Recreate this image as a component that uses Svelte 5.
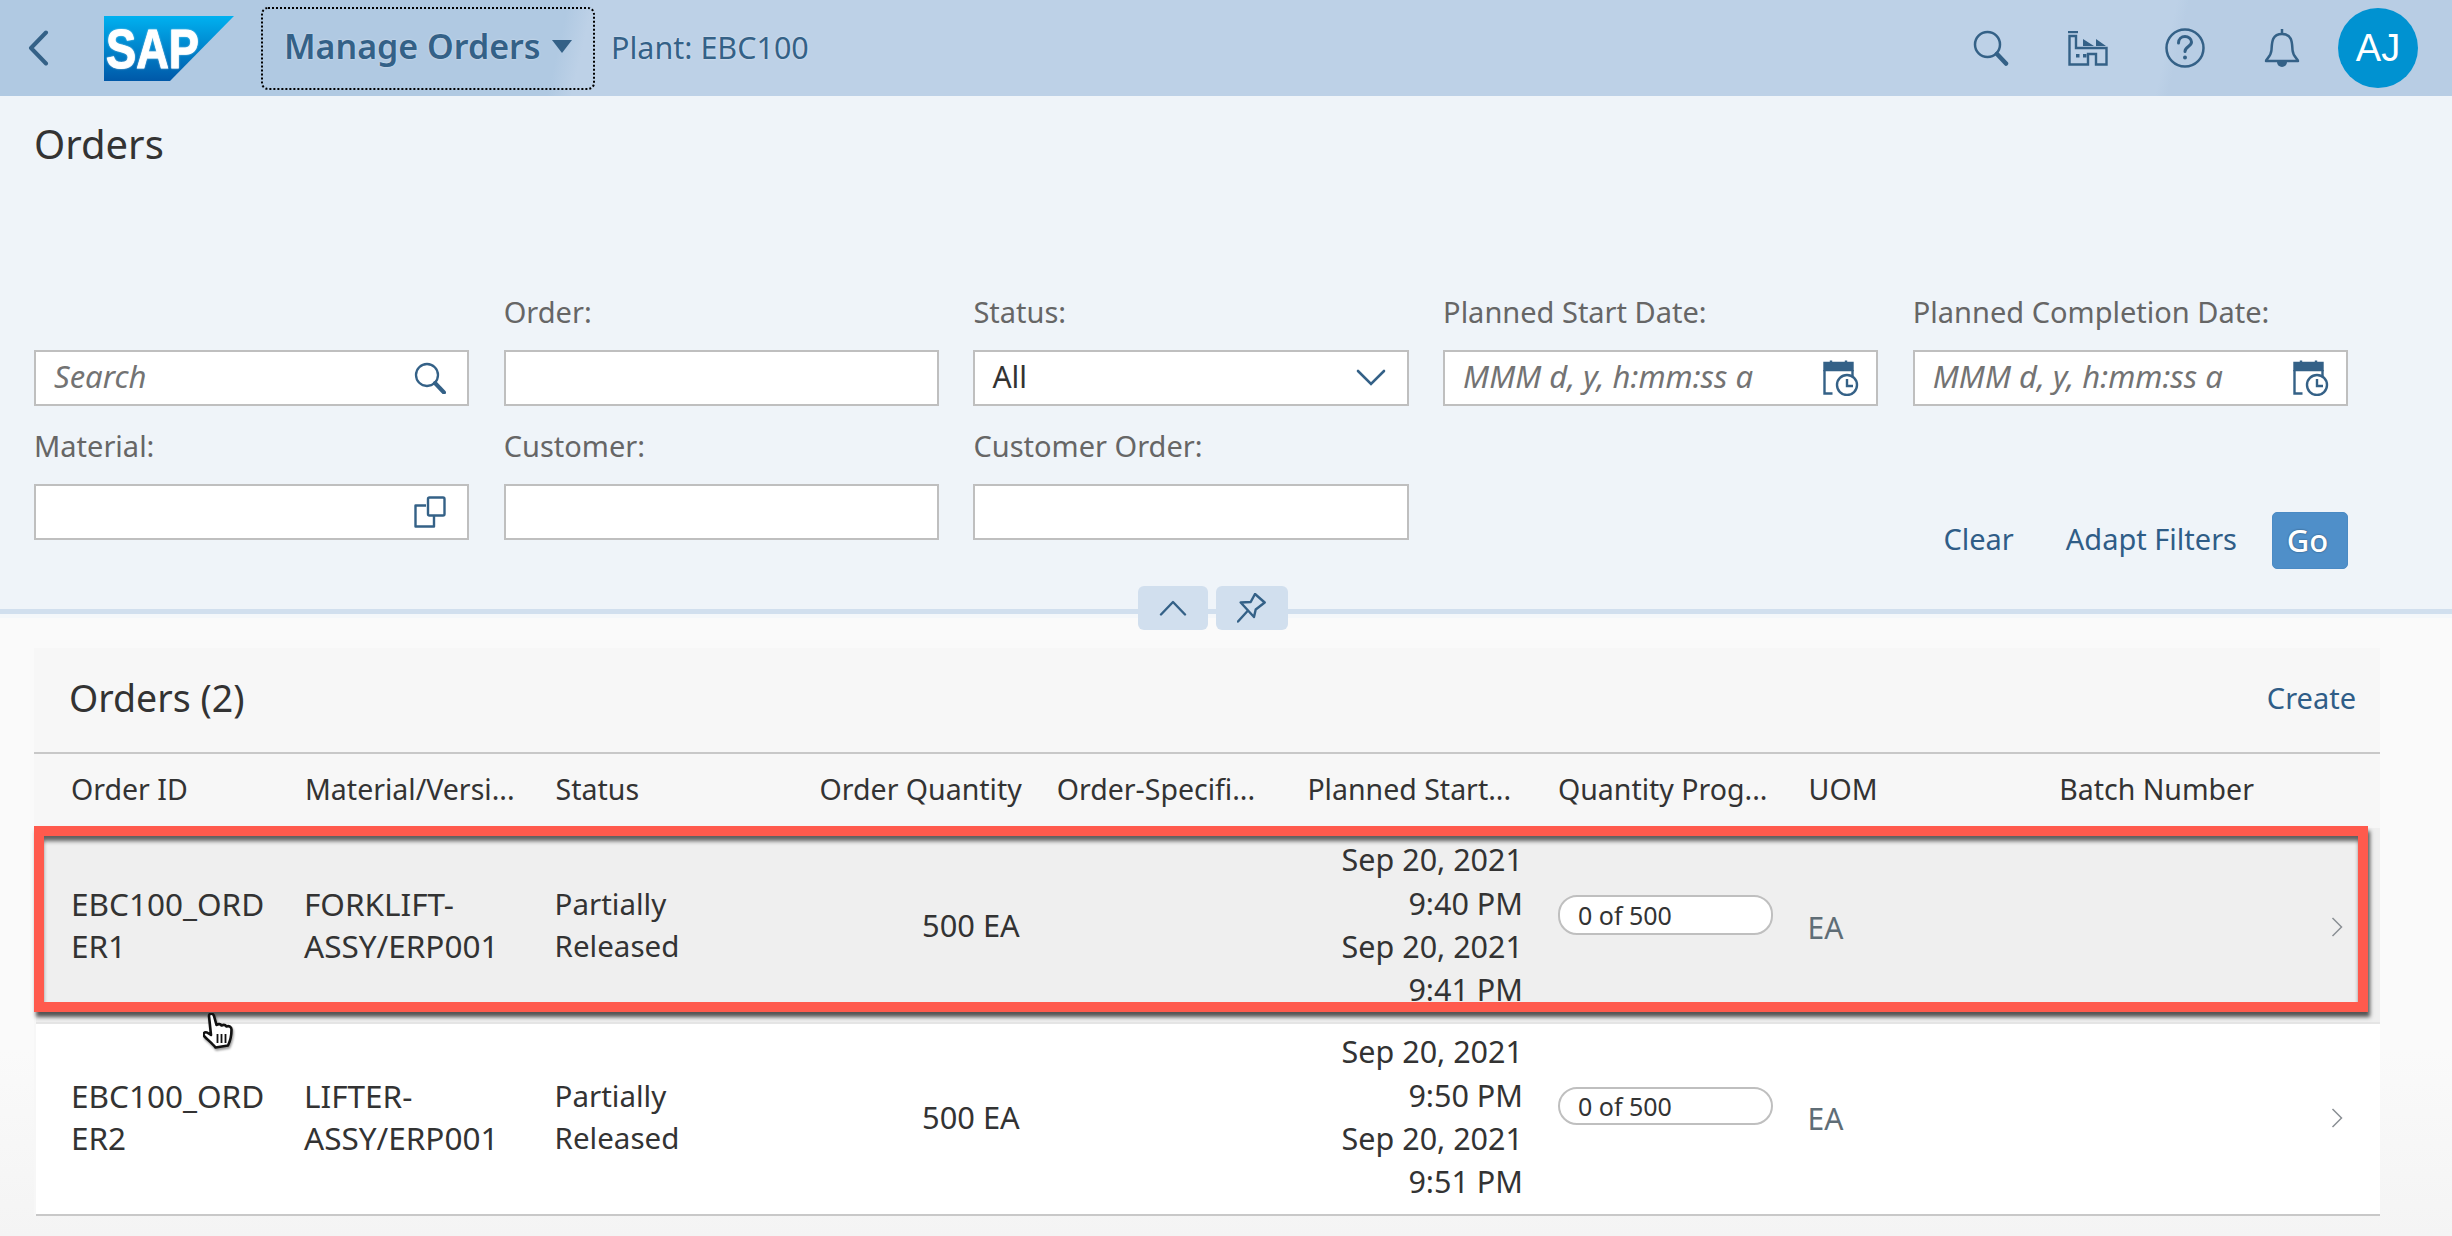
<script>
  const columns = [
    { label: 'Order ID' },
    { label: 'Material/Versi...' },
    { label: 'Status' },
    { label: 'Order Quantity', right: true },
    { label: 'Order-Specifi...' },
    { label: 'Planned Start...' },
    { label: 'Quantity Prog...' },
    { label: 'UOM' },
    { label: 'Batch Number' }
  ];
  const rows = [
    { id: ['EBC100_ORD', 'ER1'], mat: ['FORKLIFT-', 'ASSY/ERP001'], times: ['Sep 20, 2021', '9:40 PM', 'Sep 20, 2021', '9:41 PM'], active: true },
    { id: ['EBC100_ORD', 'ER2'], mat: ['LIFTER-', 'ASSY/ERP001'], times: ['Sep 20, 2021', '9:50 PM', 'Sep 20, 2021', '9:51 PM'], active: false }
  ];
</script>

{#snippet calendar()}
  <svg class="ficon cal" width="36" height="36" viewBox="0 0 36 36" fill="none" stroke="#346187" stroke-width="2.4">
    <path d="M1.5 3h28v7h-28z" fill="#346187" />
    <path d="M8 0.5v3M23 0.5v3" />
    <path d="M1.5 10v23.5h8M29.5 10v6" />
    <circle cx="24" cy="25" r="10" />
    <path d="M24 19v7h6" />
  </svg>
{/snippet}

<div class="page">
  <header class="shell">
    <svg class="back" width="21" height="36" viewBox="0 0 21 36" fill="none" stroke="#346187" stroke-width="4" stroke-linecap="round" stroke-linejoin="round"><path d="M18 2.500 3 18l15 15.500" /></svg>
    <svg class="logo" width="130" height="65" viewBox="0 0 130 65">
      <defs><linearGradient id="sapg" x1="0" y1="0" x2="0" y2="1"><stop offset="0" stop-color="#00b1f0" /><stop offset="1" stop-color="#0058a8" /></linearGradient></defs>
      <path d="M0 0h130L66 65H0z" fill="url(#sapg)" />
      <text x="2" y="52" textLength="93" lengthAdjust="spacingAndGlyphs" font-family="Liberation Sans" font-weight="700" font-size="56" fill="#fff" stroke="#fff" stroke-width="1">SAP</text>
    </svg>
    <div class="appbtn">
      <span class="apptitle">Manage Orders</span>
      <span class="caret"></span>
    </div>
    <span class="plant">Plant: EBC100</span>
    <div class="shellend">
      <span class="hicon"><svg width="36" height="37" viewBox="0 0 36 37" fill="none" stroke="#346187" stroke-width="2.500" stroke-linecap="round"><circle cx="14.500" cy="14.500" r="12.500" /><path d="M24 24l9 9.500" stroke-width="4.500" /></svg></span>
      <span class="hicon"><svg width="40" height="35" viewBox="0 0 40 35" fill="none" stroke="#346187" stroke-width="2.400"><path d="M0 1h10" /><path d="M1.500 5h6.500v12h30.500v16.500H28V23h-8v10.500H1.500z" /><path d="M15 8l11 7H15zM28 8l10 7H28z" fill="#346187" stroke="none" /><path d="M8 23h3.500v3.500H8zM15 23h3.500v3.500H15z" fill="#346187" stroke="none" /></svg></span>
      <span class="hicon"><svg width="40" height="40" viewBox="0 0 40 40" fill="none" stroke="#346187" stroke-width="2.500" stroke-linecap="round"><circle cx="20" cy="20" r="18.500" /><path d="M13.500 15c0-4 3-6.500 6.500-6.500s6.500 2.500 6.500 5.500c0 4.500-6.500 4.500-6.500 9.500" stroke-width="3" /><circle cx="20" cy="29.500" r="2" fill="#346187" stroke="none" /></svg></span>
      <span class="hicon"><svg width="36" height="40" viewBox="0 0 36 40" fill="none" stroke="#346187" stroke-width="2.500" stroke-linejoin="round"><path d="M2 33c0-2 5-4 5.500-11 .5-7 0-16 10.500-16s10 9 10.500 16c.5 7 5.500 9 5.500 11z" /><path d="M18 1v5" /><path d="M13 34a5 5 0 0 0 10 0z" fill="#346187" stroke="none" /></svg></span>
      <span class="avatar">AJ</span>
    </div>
  </header>

  <section class="filterbar">
    <h1>Orders</h1>
    <div class="grid">
      <div class="field">
        <span class="label"></span>
        <div class="input"><span class="ph">Search</span>
          <svg class="ficon search" width="32" height="32" viewBox="0 0 32 32" fill="none" stroke="#346187" stroke-width="2.300" stroke-linecap="round"><circle cx="13" cy="13" r="11" /><path d="M21 21l9 9.500" stroke-width="4" /></svg>
        </div>
      </div>
      <div class="field"><span class="label">Order:</span><div class="input"></div></div>
      <div class="field"><span class="label">Status:</span>
        <div class="input"><span class="val">All</span>
          <svg class="ficon chev" width="30" height="18" viewBox="0 0 30 18" fill="none" stroke="#346187" stroke-width="2.600" stroke-linecap="round"><path d="M2 2l13 13L28 2" /></svg>
        </div>
      </div>
      <div class="field"><span class="label">Planned Start Date:</span>
        <div class="input"><span class="ph">MMM d, y, h:mm:ss a</span>{@render calendar()}</div>
      </div>
      <div class="field"><span class="label">Planned Completion Date:</span>
        <div class="input"><span class="ph">MMM d, y, h:mm:ss a</span>{@render calendar()}</div>
      </div>
      <div class="field"><span class="label">Material:</span>
        <div class="input">
          <svg class="ficon vhelp" width="32" height="32" viewBox="0 0 32 32" fill="none" stroke="#346187" stroke-width="2.400" stroke-linejoin="round"><path d="M12 9.500H1.500V30.500h18.500V20" /><rect x="14" y="1.500" width="16.500" height="18" rx="1.500" /></svg>
        </div>
      </div>
      <div class="field"><span class="label">Customer:</span><div class="input"></div></div>
      <div class="field"><span class="label">Customer Order:</span><div class="input"></div></div>
      <div class="actions">
        <span class="link clear">Clear</span>
        <span class="link">Adapt Filters</span>
        <span class="go">Go</span>
      </div>
    </div>
  </section>

  <div class="divider">
    <span class="dbtn up"><svg width="28" height="16" viewBox="0 0 28 16" fill="none" stroke="#346187" stroke-width="2.400" stroke-linecap="round" stroke-linejoin="round"><path d="M2 14.500L14 2l12 12.500" /></svg></span>
    <span class="dbtn pin"><svg width="30" height="30" viewBox="0 0 30 30" fill="none" stroke="#346187" stroke-width="2.400" stroke-linecap="round" stroke-linejoin="round"><path d="M1 28.500l10-11M3.700 9.500l10-.5L18 1l9.700 8.500-9 7-1.700 7.500z" /></svg></span>
  </div>

  <section class="panel">
    <div class="panelhead">
      <h2>Orders (2)</h2>
      <span class="link create">Create</span>
    </div>
    <div class="tr thead">
      {#each columns as c}
        <div class="cell" class:right={c.right}>{c.label}</div>
      {/each}
    </div>
    {#each rows as r}
      <div class="tr row" class:active={r.active}>
        <div class="cell caps">{r.id[0]}<br />{r.id[1]}</div>
        <div class="cell caps">{r.mat[0]}<br />{r.mat[1]}</div>
        <div class="cell status">Partially<br />Released</div>
        <div class="cell right qty">500 EA</div>
        <div class="cell"></div>
        <div class="cell right times">
          {#each r.times as t}<div>{t}</div>{/each}
        </div>
        <div class="cell"><div class="progress">0 of 500</div></div>
        <div class="cell uom">EA</div>
        <div class="cell"></div>
        <svg class="rowchev" width="12" height="20" viewBox="0 0 12 20" fill="none" stroke="#8a8f94" stroke-width="1.500"><path d="M1.500 1l9 9-9 9" /></svg>
        {#if r.active}
          <div class="frame"></div>
          <svg class="hand" width="32" height="36" viewBox="0 0 32 36">
            <path d="M6 3c0-3 4-3 5 0l2.500 9c2-1.500 4-1 5 .5 2-1 4-.5 5 1 2.500-1 5 .5 5 3 0 6-1 11-3.500 16l-12.500 2c-3-4-7-7-11-11-2-2-.5-5 2.500-4l4 2.500z" fill="#fff" stroke="#111" stroke-width="2.600" stroke-linejoin="round" />
            <path d="M14.500 21v9M18.500 21v9M22.500 21v9" stroke="#111" stroke-width="1.800" />
          </svg>
        {/if}
      </div>
    {/each}
  </section>
</div>

<style>
  :global(body) { margin: 0; }
  .page {
    position: relative;
    width: 2452px;
    height: 1236px;
    overflow: hidden;
    background: linear-gradient(180deg, #fafafa 0, #fafafa 85%, #f4f4f4 100%);
    font-family: "Noto Sans", sans-serif;
    font-size: 30px;
    color: #333;
  }
  .shell {
    height: 96px;
    display: flex;
    align-items: center;
    padding: 0 34px 0 28px;
    box-sizing: border-box;
    background: linear-gradient(103deg, #b0c9e2 0, #b0c9e2 23%, #bdd1e7 24%, #bdd1e7 88%, #b8cde4 88.5%);
    color: #346187;
    text-shadow: 0 0 2px rgba(255, 255, 255, 0.6);
  }
  .back { flex: none; }
  .logo { flex: none; margin-left: 55px; }
  .appbtn {
    flex: none;
    box-sizing: border-box;
    width: 334px;
    height: 83px;
    margin-left: 27px;
    padding: 0 0 4px 21px;
    display: flex;
    align-items: center;
    gap: 11px;
    border: 2px dotted #000;
    border-radius: 7px;
  }
  .apptitle { font-size: 34px; font-weight: 600; }
  .caret {
    width: 0;
    height: 0;
    border-left: 10px solid transparent;
    border-right: 10px solid transparent;
    border-top: 13px solid #346187;
  }
  .plant { margin: 0 0 3px 16px; font-size: 30.5px; }
  .shellend { margin-left: auto; display: flex; align-items: center; }
  .hicon { width: 97px; display: flex; justify-content: center; align-items: center; }
  .avatar {
    width: 80px;
    height: 80px;
    margin-left: 8px;
    border-radius: 50%;
    background: #0092d1;
    color: #fff;
    font-family: "Liberation Sans", sans-serif;
    font-size: 38px;
    display: flex;
    align-items: center;
    justify-content: center;
    text-shadow: none;
  }

  .filterbar {
    box-sizing: border-box;
    height: 513px;
    padding: 0 104px 0 34px;
    background: #eff4f9;
  }
  h1 {
    margin: 0;
    height: 201px;
    padding-top: 24px;
    box-sizing: border-box;
    font-size: 40px;
    line-height: 48px;
    font-weight: 400;
    color: #333;
  }
  .grid {
    display: grid;
    grid-template-columns: repeat(5, 1fr);
    column-gap: 34.500px;
    row-gap: 25px;
    margin-right: 0;
  }
  .field { display: flex; flex-direction: column; }
  .label {
    height: 32px;
    margin-bottom: 21px;
    line-height: 29px;
    font-size: 29px;
    color: #666;
  }
  .input {
    box-sizing: border-box;
    height: 56px;
    display: flex;
    align-items: center;
    padding: 0 19px 0 19px;
    background: #fff;
    border: 2px solid #bfbfbf;
  }
  .ph { font-style: italic; color: #737373; font-size: 31px; margin: 0 0 5px -1px; }
  .val { color: #333; font-size: 30px; margin: 0 0 3px -2px; }
  .ficon { margin-left: auto; flex: none; }
  .search { margin-right: 2px; }
  .vhelp { margin-right: 2px; }
  .chev { margin-right: 2px; }
  .cal { margin-right: -2px; }
  .actions {
    grid-column: 4 / 6;
    align-self: end;
    margin-bottom: -29px;
    display: flex;
    justify-content: flex-end;
    align-items: center;
    gap: 35px;
  }
  .link { color: #2f5d87; font-size: 29px; padding-bottom: 4px; }
  .create { padding-bottom: 0; }
  .clear { margin-right: 17px; }
  .go {
    width: 76px;
    height: 57px;
    box-sizing: border-box;
    display: flex;
    align-items: center;
    justify-content: center;
    padding: 0 5px 2px 0;
    background: #4f8fc9;
    border: 1px solid #4a8ac4;
    border-radius: 5px;
    color: #fff;
    font-size: 31px;
    font-weight: 500;
    text-shadow: 0 0 2px rgba(0, 0, 0, 0.5);
  }

  .divider {
    position: relative;
    height: 5px;
    background: #d1dfee;
    box-shadow: 0 4px 0 #f4f7fa;
    display: flex;
    justify-content: center;
    align-items: center;
    gap: 8px;
    padding-right: 26px;
    z-index: 1;
  }
  .dbtn {
    flex: none;
    height: 44px;
    margin-bottom: 7px;
    background: #d1dfee;
    border-radius: 6px;
    display: flex;
    align-items: center;
    justify-content: center;
  }
  .up { width: 70px; }
  .pin { width: 72px; }

  .panel {
    box-sizing: border-box;
    width: 2346px;
    margin: 34px 0 0 34px;
    background: #f7f7f7;
  }
  .panelhead {
    box-sizing: border-box;
    height: 106px;
    padding: 0 24px 5px 35px;
    display: flex;
    align-items: center;
    justify-content: space-between;
    border-bottom: 2px solid #c8c8c8;
  }
  h2 { margin: 0; font-size: 37.5px; font-weight: 400; color: #333; }
  .tr {
    display: grid;
    grid-template-columns: 255px repeat(8, 250.6px);
    align-items: center;
  }
  .cell { box-sizing: border-box; padding: 0 16px; min-width: 0; }
  .cell:first-child { padding-left: 37px; padding-right: 0; }
  .right { text-align: right; padding-right: 20px; }
  .thead { height: 74px; padding-bottom: 4px; box-sizing: border-box; white-space: nowrap; }
  .thead .cell { font-size: 28.5px; }
  .thead .right { padding-right: 19px; }
  .row {
    position: relative;
    box-sizing: border-box;
    height: 192px;
    margin-left: 2px;
    padding-bottom: 4px;
    grid-template-columns: 252px repeat(8, 250.6px);
    background: #fff;
    line-height: 42px;
    border-bottom: 2px solid #c8c8c8;
  }
  .row.active {
    height: 196px;
    padding-bottom: 0;
    background: #efefef;
    border-bottom-color: #e5e5e5;
  }
  .row .cell:first-child { padding-left: 35px; }
  .caps { font-size: 31.5px; }
  .status { font-size: 29.5px; }
  .qty { font-size: 30.8px; }
  .times { line-height: 43.4px; font-size: 30.5px; padding-right: 18px; }
  .progress {
    box-sizing: border-box;
    width: 215px;
    height: 38px;
    margin: -22px 0 0 1px;
    padding-left: 18px;
    background: #fff;
    border: 2px solid #bfbfbf;
    border-radius: 19px;
    font-size: 25px;
    line-height: 34px;
  }
  .active .progress { height: 40px; margin-top: -20px; line-height: 37px; }
  .uom { color: #5f6d76; padding-top: 3px; }
  .active .uom { padding-top: 5px; }
  .rowchev { position: absolute; left: 2295px; top: 84px; }
  .active .rowchev { top: 89px; }
  .frame {
    position: absolute;
    left: -2px;
    top: -2px;
    width: 2334px;
    height: 186px;
    box-sizing: border-box;
    border: 10px solid #ff5a4d;
    box-shadow: 2px 5px 4px rgba(0, 0, 0, 0.65), inset 0 6px 4px -1px rgba(0, 0, 0, 0.6);
    pointer-events: none;
  }
  .hand { position: absolute; left: 167px; top: 185px; z-index: 2; filter: drop-shadow(1px 2px 1px rgba(0, 0, 0, 0.4)); }
</style>
